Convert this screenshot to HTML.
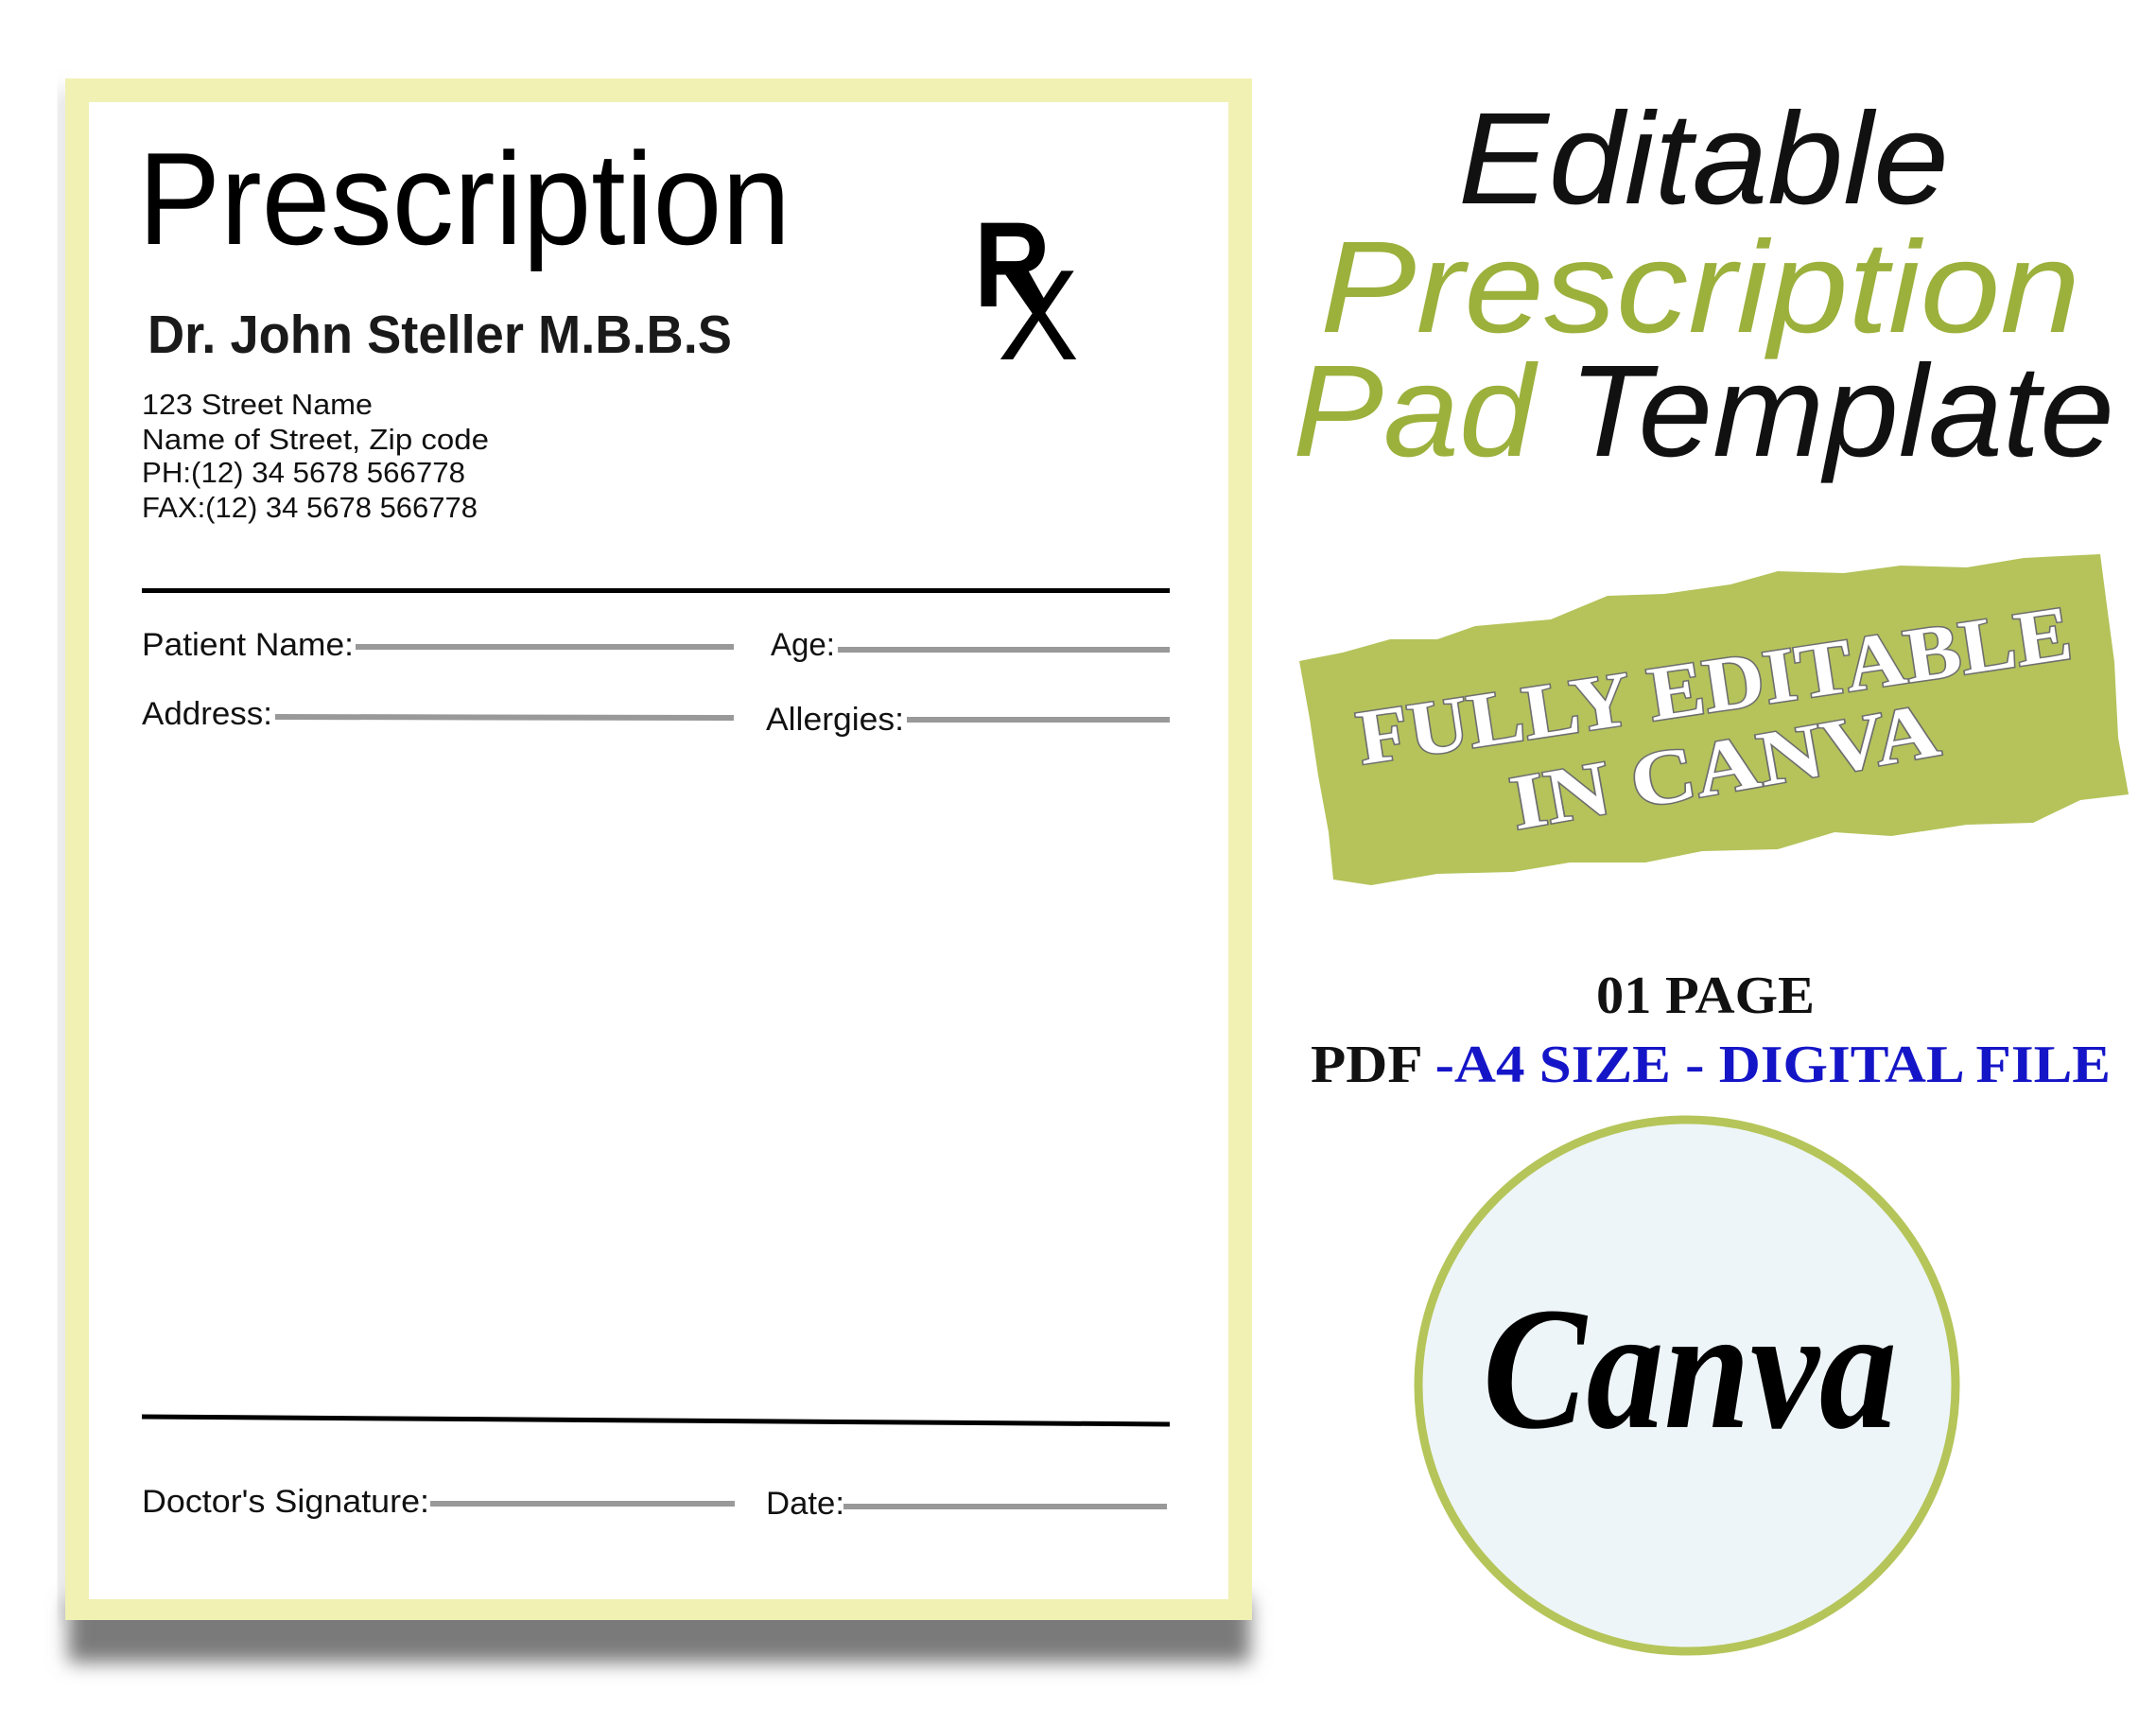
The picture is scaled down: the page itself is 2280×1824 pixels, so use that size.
<!DOCTYPE html>
<html><head><meta charset="utf-8"><style>
html,body{margin:0;padding:0;background:#fff;width:2280px;height:1824px;overflow:hidden}
svg{display:block}
</style></head><body>
<svg width="2280" height="1824" viewBox="0 0 2280 1824" xmlns="http://www.w3.org/2000/svg">
<defs>
<filter id="b" x="-10%" y="-50%" width="120%" height="200%"><feGaussianBlur stdDeviation="10"/></filter>
</defs>
<rect width="2280" height="1824" fill="#fff"/>
<rect x="72" y="1690" width="1250" height="68" fill="#7a7a7a" filter="url(#b)"/>
<rect x="62" y="95" width="14" height="1620" fill="#bbb" filter="url(#b)" opacity="0.6"/>
<rect x="69" y="83" width="1255" height="1630" fill="#f1f1b4"/>
<rect x="94" y="108" width="1205" height="1583" fill="#fff"/>
<g font-family="Liberation Sans, sans-serif" fill="#000">
<text x="146" y="258" font-size="139" textLength="690" lengthAdjust="spacingAndGlyphs">Prescription</text>
<text x="1030" y="324" font-size="128" font-weight="bold" textLength="81" lengthAdjust="spacingAndGlyphs">R</text>
<text x="1055" y="380" font-size="136" textLength="86" lengthAdjust="spacingAndGlyphs">X</text>
<text x="156" y="373" font-size="57" font-weight="bold" textLength="618" lengthAdjust="spacingAndGlyphs" fill="#1a1a1a">Dr. John Steller M.B.B.S</text>
<g font-size="31" fill="#111">
<text x="150" y="438" textLength="244" lengthAdjust="spacingAndGlyphs">123 Street Name</text>
<text x="150" y="475" textLength="367" lengthAdjust="spacingAndGlyphs">Name of Street, Zip code</text>
<text x="150" y="510" textLength="342" lengthAdjust="spacingAndGlyphs">PH:(12) 34 5678 566778</text>
<text x="150" y="547" textLength="355" lengthAdjust="spacingAndGlyphs">FAX:(12) 34 5678 566778</text>
</g>
<rect x="150" y="622" width="1087" height="5"/>
<g font-size="34" fill="#111">
<text x="150" y="693" textLength="224" lengthAdjust="spacingAndGlyphs">Patient Name:</text>
<text x="815" y="693" textLength="68" lengthAdjust="spacingAndGlyphs">Age:</text>
<text x="150" y="766" textLength="138" lengthAdjust="spacingAndGlyphs">Address:</text>
<text x="810" y="772" textLength="146" lengthAdjust="spacingAndGlyphs">Allergies:</text>
<text x="150" y="1599" textLength="304" lengthAdjust="spacingAndGlyphs">Doctor's Signature:</text>
<text x="810" y="1601" textLength="83" lengthAdjust="spacingAndGlyphs">Date:</text>
</g>
<g stroke="#999" stroke-width="6">
<line x1="376" y1="684" x2="776" y2="684"/>
<line x1="886" y1="687" x2="1237" y2="687"/>
<line x1="291" y1="758" x2="776" y2="759"/>
<line x1="959" y1="761" x2="1237" y2="761"/>
<line x1="455" y1="1590" x2="777" y2="1590"/>
<line x1="892" y1="1593" x2="1234" y2="1593"/>
</g>
<line x1="150" y1="1498" x2="1237" y2="1506" stroke="#000" stroke-width="5"/>
</g>
<g font-family="Liberation Sans, sans-serif" font-style="italic">
<text x="1542" y="215" font-size="138" fill="#111" textLength="519" lengthAdjust="spacingAndGlyphs">Editable</text>
<text x="1396" y="351" font-size="138" fill="#9cb03c" textLength="804" lengthAdjust="spacingAndGlyphs">Prescription</text>
<text x="1367" y="482" font-size="138" fill="#9cb03c" textLength="256" lengthAdjust="spacingAndGlyphs">Pad</text>
<text x="1659" y="482" font-size="138" fill="#111" textLength="577" lengthAdjust="spacingAndGlyphs">Template</text>
</g>
<polygon fill="#b5c35a" points="1374,699 1420,690 1470,676 1520,676 1560,662 1640,655 1700,630 1760,628 1830,618 1880,604 1950,606 2010,598 2080,600 2140,590 2221,586 2228,640 2236,700 2240,780 2251,840 2200,846 2150,870 2080,872 2000,884 1940,880 1880,898 1800,900 1740,912 1660,912 1600,922 1520,924 1450,936 1410,930 1405,880 1394,820 1385,760"/>
<g font-family="Liberation Serif, serif" font-weight="bold" fill="#fff" stroke="#6e6e6e" stroke-width="3" paint-order="stroke">
<text transform="translate(1440,808) rotate(-8.5)" font-size="82" textLength="762" lengthAdjust="spacingAndGlyphs">FULLY EDITABLE</text>
<text transform="translate(1603,877) rotate(-10)" font-size="82" textLength="458" lengthAdjust="spacingAndGlyphs">IN CANVA</text>
</g>
<g font-family="Liberation Serif, serif" font-weight="bold" font-size="56">
<text x="1688" y="1071" fill="#111" textLength="231" lengthAdjust="spacingAndGlyphs">01 PAGE</text>
<text x="1386" y="1144" textLength="846" lengthAdjust="spacingAndGlyphs"><tspan fill="#111">PDF </tspan><tspan fill="#1515c8">-A4 SIZE - DIGITAL FILE</tspan></text>
</g>
<ellipse cx="1784" cy="1465" rx="284" ry="281" fill="#eef5f8" stroke="#b5c55a" stroke-width="9"/>
<text x="1568" y="1509" font-family="Liberation Serif, serif" font-style="italic" font-weight="bold" font-size="185" fill="#000" textLength="438" lengthAdjust="spacingAndGlyphs">Canva</text>
</svg>
</body></html>
